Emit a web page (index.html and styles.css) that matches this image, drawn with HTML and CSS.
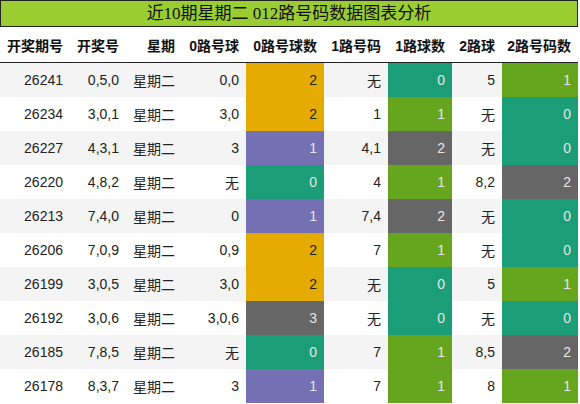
FILE: index.html
```html
<!DOCTYPE html>
<html lang="zh-CN">
<head>
    <meta charset="UTF-8">
    <title>近10期星期二 012路号码数据图表分析</title>
    <link rel="stylesheet" href="styles.css">
</head>
<body>
    <div class="chart">
        <div class="chart-title">近10期星期二 012路号码数据图表分析</div>
        <table class="road-table">
            <colgroup>
                <col class="w70"><col class="w56"><col class="w56"><col class="w64"><col class="w78">
                <col class="w64"><col class="w64"><col class="w50"><col class="w76">
            </colgroup>
            <thead>
                <tr>
                    <th>开奖期号</th><th>开奖号</th><th>星期</th><th>0路号球</th><th>0路号球数</th>
                    <th>1路号码</th><th>1路球数</th><th>2路球</th><th>2路号码数</th>
                </tr>
            </thead>
            <tbody>
                <tr><td>26241</td><td>0,5,0</td><td>星期二</td><td>0,0</td><td class="c-orange">2</td><td>无</td><td class="c-teal">0</td><td>5</td><td class="c-green">1</td></tr>
                <tr><td>26234</td><td>3,0,1</td><td>星期二</td><td>3,0</td><td class="c-orange">2</td><td>1</td><td class="c-green">1</td><td>无</td><td class="c-teal">0</td></tr>
                <tr><td>26227</td><td>4,3,1</td><td>星期二</td><td>3</td><td class="c-purple">1</td><td>4,1</td><td class="c-gray">2</td><td>无</td><td class="c-teal">0</td></tr>
                <tr><td>26220</td><td>4,8,2</td><td>星期二</td><td>无</td><td class="c-teal">0</td><td>4</td><td class="c-green">1</td><td>8,2</td><td class="c-gray">2</td></tr>
                <tr><td>26213</td><td>7,4,0</td><td>星期二</td><td>0</td><td class="c-purple">1</td><td>7,4</td><td class="c-gray">2</td><td>无</td><td class="c-teal">0</td></tr>
                <tr><td>26206</td><td>7,0,9</td><td>星期二</td><td>0,9</td><td class="c-orange">2</td><td>7</td><td class="c-green">1</td><td>无</td><td class="c-teal">0</td></tr>
                <tr><td>26199</td><td>3,0,5</td><td>星期二</td><td>3,0</td><td class="c-orange">2</td><td>无</td><td class="c-teal">0</td><td>5</td><td class="c-green">1</td></tr>
                <tr><td>26192</td><td>3,0,6</td><td>星期二</td><td>3,0,6</td><td class="c-gray">3</td><td>无</td><td class="c-teal">0</td><td>无</td><td class="c-teal">0</td></tr>
                <tr><td>26185</td><td>7,8,5</td><td>星期二</td><td>无</td><td class="c-teal">0</td><td>7</td><td class="c-green">1</td><td>8,5</td><td class="c-gray">2</td></tr>
                <tr><td>26178</td><td>8,3,7</td><td>星期二</td><td>3</td><td class="c-purple">1</td><td>7</td><td class="c-green">1</td><td>8</td><td class="c-green">1</td></tr>
            </tbody>
        </table>
    </div>
</body>
</html>
```

FILE: styles.css
```css
body {
    margin: 0;
    background-color: #fff;
    font-family: "Liberation Sans", "Noto Sans CJK SC", sans-serif;
    color: #222;
}

.chart {
    width: 578px;
}

.chart-title {
    height: 25px;
    line-height: 25px;
    background-color: #9acd32;
    border: 1px solid #222;
    text-align: center;
    font-family: "Liberation Serif", "Noto Sans CJK SC", serif;
    font-size: 17px;
    color: #111;
}

.road-table {
    width: 578px;
    border-collapse: collapse;
    table-layout: fixed;
    font-size: 14px;
}

.w70 { width: 70px; }
.w56 { width: 56px; }
.w64 { width: 64px; }
.w78 { width: 78px; }
.w50 { width: 50px; }
.w76 { width: 76px; }

.road-table th,
.road-table td {
    padding: 0 7px 0 0;
    text-align: right;
    white-space: nowrap;
}

.road-table th {
    height: 35px;
    font-weight: bold;
    border-bottom: 1px solid #222;
    color: #111;
}

.road-table td {
    height: 34px;
}

.road-table tbody tr:nth-child(odd) {
    background-color: #f4f4f4;
}

.road-table td.c-orange { background-color: #e6ab02; color: #222; }
.road-table td.c-teal { background-color: #1b9e77; color: #e6e6e6; }
.road-table td.c-green { background-color: #66a61e; color: #e6e6e6; }
.road-table td.c-purple { background-color: #7570b3; color: #e6e6e6; }
.road-table td.c-gray { background-color: #666; color: #e6e6e6; }
```
